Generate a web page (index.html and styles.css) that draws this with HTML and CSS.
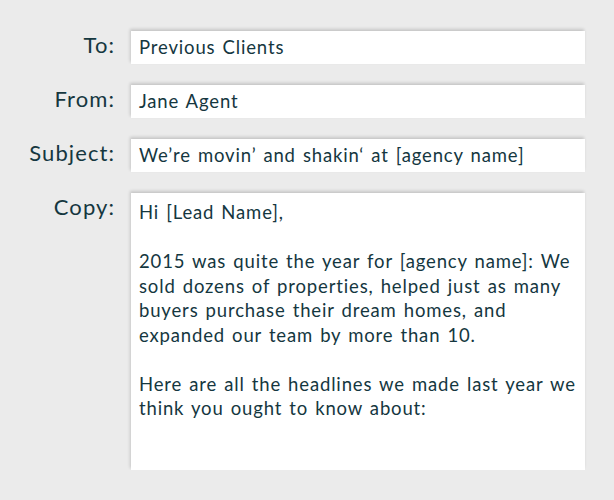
FILE: index.html
```html
<!DOCTYPE html>
<html lang="en">
<head>
    <meta charset="UTF-8">
    <meta name="viewport" content="width=device-width, initial-scale=1.0">
    <title>Email Preview</title>
    <link rel="stylesheet" href="styles.css">
</head>
<body>
    <div class="email-form">
        <div class="field-label">To:</div>
        <div class="field-value">Previous Clients</div>

        <div class="field-label">From:</div>
        <div class="field-value">Jane Agent</div>

        <div class="field-label">Subject:</div>
        <div class="field-value">We’re movin’ and shakin‘ at [agency name]</div>

        <div class="field-label">Copy:</div>
        <div class="field-value field-copy">
            <p>Hi [Lead Name],</p>
            <p>2015 was quite the year for [agency name]: We<br>
            sold dozens of properties, helped just as many<br>
            buyers purchase their dream homes, and<br>
            expanded our team by more than 10.</p>
            <p>Here are all the headlines we made last year we<br>
            think you ought to know about:</p>
        </div>
    </div>
</body>
</html>
```
FILE: styles.css
```css
* {
    margin: 0;
    padding: 0;
    box-sizing: border-box;
}

body {
    font-family: 'Lato', sans-serif;
    background: #ebebeb;
    color: #15373f;
}

.email-form {
    display: grid;
    grid-template-columns: 114px 454px;
    column-gap: 17px;
    row-gap: 21px;
    padding-top: 31px;
}

.field-label {
    text-align: right;
    font-size: 22px;
    line-height: 28px;
    letter-spacing: 1.1px;
    margin-right: -1.1px;
}

.field-value {
    background: #fff;
    height: 33px;
    padding: 0 8px;
    font-size: 18.5px;
    line-height: 33px;
    letter-spacing: 0.85px;
    word-spacing: 1.5px;
    white-space: nowrap;
    box-shadow: -1px -2px 3px rgba(0, 0, 0, 0.16);
}

.field-copy {
    height: 277px;
    padding-top: 7px;
    line-height: 24.5px;
}

.field-copy p + p {
    margin-top: 24.5px;
}
```
